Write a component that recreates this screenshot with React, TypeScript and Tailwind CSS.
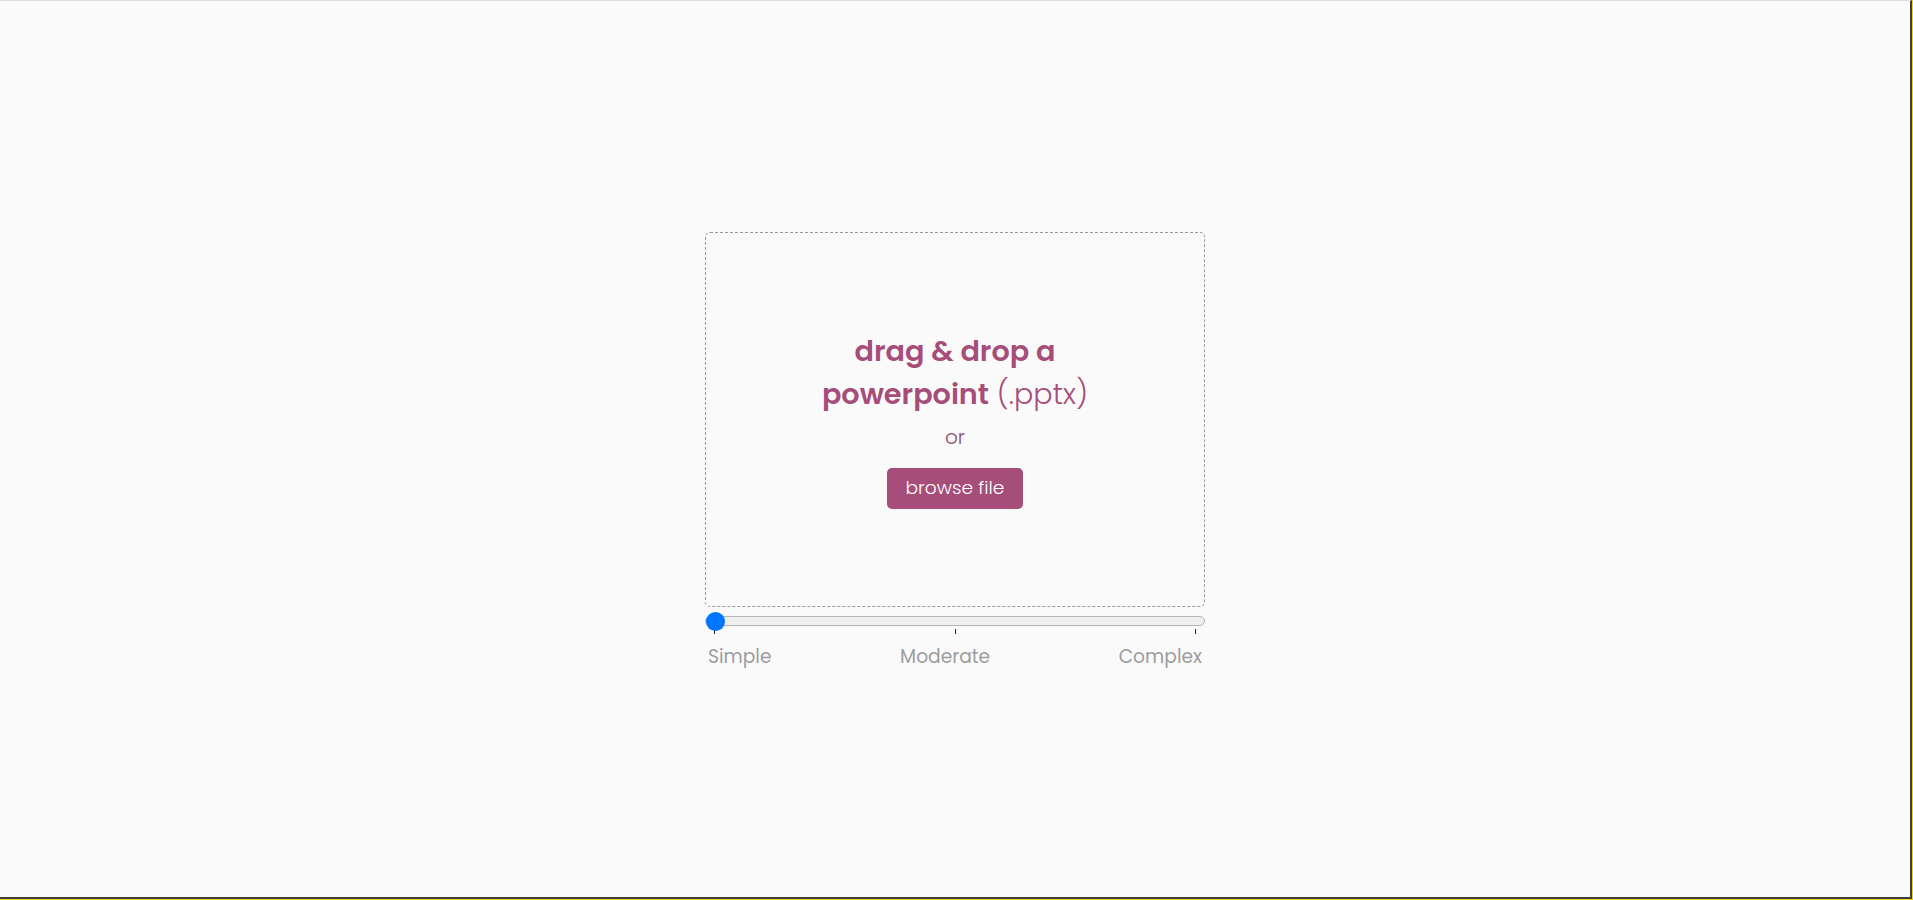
import React from "react";

export default function App() {
  const font = { fontFamily: "Poppins, Inter, 'Noto Sans', sans-serif" };
  return (
    <div className="h-[900px] w-full border-r border-b border-[#f2d40c] bg-[#fafafa]" style={font}>
      <div className="flex h-full w-full flex-col items-center justify-center border-t border-r-2 border-b-2 border-t-[#dcdcdf] border-r-[#3b3f4a] border-b-[#3b3f4a] pt-[3px]">
        <div className="flex w-[500px] flex-col">
          <div className="flex h-[375px] w-full flex-col items-center justify-center rounded-[5px] border border-dashed border-[#9a9a9a]">
            <div className="text-center text-[28.7px] leading-[43px] text-[#a64d79]">
              <div className="font-semibold">drag &amp; drop a</div>
              <div>
                <span className="font-semibold">powerpoint</span>{" "}
                <span className="font-light">(.pptx)</span>
              </div>
            </div>
            <div className="mt-[6px] text-[20px] leading-[30px] font-light text-[#8f4f70]">or</div>
            <button className="mt-[16px] h-[41px] w-[136px] rounded-[5px] bg-[#a64d79] text-[18.67px] font-light text-white">
              browse file
            </button>
          </div>
          <div className="relative mt-[9px] h-[10px] w-full rounded-full border border-[#b4b4b4] bg-[#efefef]">
            <div className="absolute left-[0px] top-[-5px] h-[19px] w-[19px] rounded-full bg-[#0075ff]" />
          </div>
          <div className="mt-[3px] flex h-[5px] justify-between px-[9px]">
            <div className="h-[5px] w-px bg-[#222]" />
            <div className="h-[5px] w-px bg-[#222]" />
            <div className="h-[5px] w-px bg-[#222]" />
          </div>
          <div className="mt-[10px] flex justify-between px-[3px] text-[18.67px] leading-[26px] text-[#9d9d9d]">
            <span>Simple</span>
            <span>Moderate</span>
            <span>Complex</span>
          </div>
        </div>
      </div>
    </div>
  );
}
